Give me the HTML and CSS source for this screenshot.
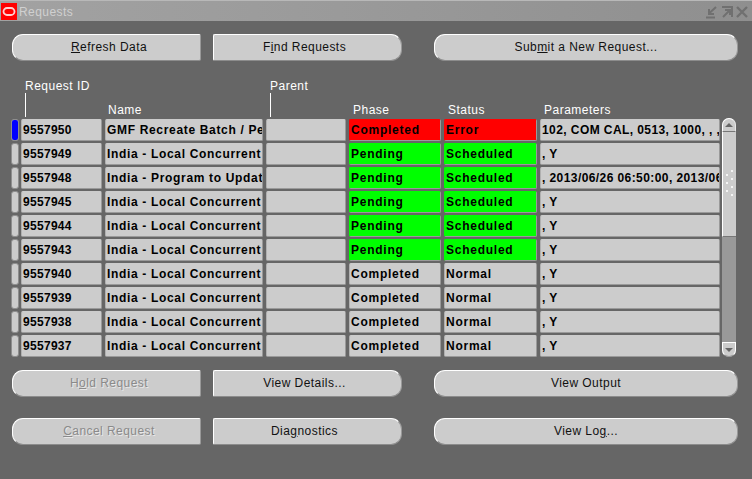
FILE: index.html
```html
<!DOCTYPE html>
<html lang="en">
<head>
<meta charset="utf-8">
<title>Requests</title>
<link rel="stylesheet" href="styles.css">
</head>
<body>
<div class="window">
  <header class="titlebar">
    <svg class="logo" width="16" height="17" viewBox="0 0 16 17"><rect width="16" height="17" fill="#ff0000"/><rect x="2.5" y="5" width="11" height="7" rx="3.5" fill="none" stroke="#ffd0d0" stroke-width="1.8"/></svg>
    <span class="title">Requests</span>
    <div class="winctl">
      <svg width="14" height="14" viewBox="0 0 14 14"><path d="M1 12.5H10M11 2L4 8.5M4 4V9H9" fill="none" stroke="#707070" stroke-width="2"/></svg>
      <svg width="14" height="14" viewBox="0 0 14 14"><path d="M2 2H12V12M3 12L10 5M5 5H10V10" fill="none" stroke="#707070" stroke-width="2"/></svg>
      <svg width="14" height="14" viewBox="0 0 14 14"><path d="M2 2L12 12M12 2L2 12" fill="none" stroke="#707070" stroke-width="2.4"/></svg>
    </div>
  </header>

  <div class="btnrow first">
    <button class="btn left"><u>R</u>efresh Data</button>
    <button class="btn mid">F<u>i</u>nd Requests</button>
    <button class="btn wide">Sub<u>m</u>it a New Request...</button>
  </div>

  <div class="grid">
    <div class="heads">
      <div class="head"></div>
      <div class="head tall"><span>Request ID</span><i class="tick"></i></div>
      <div class="head nmh"><span>Name</span></div>
      <div class="head tall"><span>Parent</span><i class="tick"></i></div>
      <div class="head"><span>Phase</span></div>
      <div class="head"><span>Status</span></div>
      <div class="head"><span>Parameters</span></div>
    </div>
    <div class="body">
      <div class="rows">
        <div class="row"><div class="rh current"><b></b></div><div class="c id">9557950</div><div class="c nm">GMF Recreate Batch / Pending Resources</div><div class="c"></div><div class="c ph red">Completed</div><div class="c ph red">Error</div><div class="c pa">102, COM CAL, 0513, 1000, , , , , ,</div></div>
        <div class="row"><div class="rh"></div><div class="c id">9557949</div><div class="c nm">India - Local Concurrent Program</div><div class="c"></div><div class="c ph green">Pending</div><div class="c ph green">Scheduled</div><div class="c pa">, Y</div></div>
        <div class="row"><div class="rh"></div><div class="c id">9557948</div><div class="c nm">India - Program to Update Records</div><div class="c"></div><div class="c ph green">Pending</div><div class="c ph green">Scheduled</div><div class="c pa">, 2013/06/26 06:50:00, 2013/06/26 07:00:00</div></div>
        <div class="row"><div class="rh"></div><div class="c id">9557945</div><div class="c nm">India - Local Concurrent Program</div><div class="c"></div><div class="c ph green">Pending</div><div class="c ph green">Scheduled</div><div class="c pa">, Y</div></div>
        <div class="row"><div class="rh"></div><div class="c id">9557944</div><div class="c nm">India - Local Concurrent Program</div><div class="c"></div><div class="c ph green">Pending</div><div class="c ph green">Scheduled</div><div class="c pa">, Y</div></div>
        <div class="row"><div class="rh"></div><div class="c id">9557943</div><div class="c nm">India - Local Concurrent Program</div><div class="c"></div><div class="c ph green">Pending</div><div class="c ph green">Scheduled</div><div class="c pa">, Y</div></div>
        <div class="row"><div class="rh"></div><div class="c id">9557940</div><div class="c nm">India - Local Concurrent Program</div><div class="c"></div><div class="c ph">Completed</div><div class="c ph">Normal</div><div class="c pa">, Y</div></div>
        <div class="row"><div class="rh"></div><div class="c id">9557939</div><div class="c nm">India - Local Concurrent Program</div><div class="c"></div><div class="c ph">Completed</div><div class="c ph">Normal</div><div class="c pa">, Y</div></div>
        <div class="row"><div class="rh"></div><div class="c id">9557938</div><div class="c nm">India - Local Concurrent Program</div><div class="c"></div><div class="c ph">Completed</div><div class="c ph">Normal</div><div class="c pa">, Y</div></div>
        <div class="row"><div class="rh"></div><div class="c id">9557937</div><div class="c nm">India - Local Concurrent Program</div><div class="c"></div><div class="c ph">Completed</div><div class="c ph">Normal</div><div class="c pa">, Y</div></div>
      </div>
      <div class="scrollbar">
        <div class="arrow up"><i></i></div>
        <div class="track">
          <div class="thumb">
            <svg class="grip" width="8" height="26" viewBox="0 0 8 26"><g fill="#f4f4f4"><rect x="5" y="0" width="2" height="2"/><rect x="0" y="4" width="2" height="2"/><rect x="5" y="8" width="2" height="2"/><rect x="0" y="12" width="2" height="2"/><rect x="5" y="16" width="2" height="2"/><rect x="0" y="20" width="2" height="2"/><rect x="5" y="24" width="2" height="2"/></g></svg>
          </div>
        </div>
        <div class="arrow down"><i></i></div>
      </div>
    </div>
  </div>

  <div class="btnrow second">
    <button class="btn left dis">H<u>o</u>ld Request</button>
    <button class="btn mid">View Details...</button>
    <button class="btn wide">View Output</button>
  </div>
  <div class="btnrow third">
    <button class="btn left dis"><u>C</u>ancel Request</button>
    <button class="btn mid">Dia<u>g</u>nostics</button>
    <button class="btn wide">View Lo<u>g</u>...</button>
  </div>
</div>
</body>
</html>
```
FILE: styles.css
```css
* { box-sizing: border-box; }
html, body { margin: 0; padding: 0; }
body { background: #666666; font-family: "Liberation Sans", Arial, sans-serif; font-size: 12px; overflow: hidden; }
.window { width: 752px; height: 479px; display: flex; flex-direction: column; background: #666666; }

.titlebar { height: 21px; flex: none; display: flex; align-items: center; padding: 1px 3px 0 1px; gap: 2px;
  border-top: 1px solid #b8b8b8; background: linear-gradient(90deg, #a2a2a2, #9a9a9a 45%, #8f8f8f); }
.logo { flex: none; }
.title { color: #d0d0d0; font-size: 12px; letter-spacing: .45px; }
.winctl { margin-left: auto; display: flex; gap: 1px; }

.btnrow { flex: none; display: flex; padding-left: 12px; }
.first { margin-top: 13px; }
.second { margin-top: 13px; }
.third { margin-top: 21px; }
.btn { height: 27px; padding: 0 0 2px; font: inherit; font-size: 12px; letter-spacing: .45px; color: #111; background: #cccccc;
  border: 0; border-top: 1px solid #fff; border-bottom: 1px solid #8c8c8c; }
.btn u { text-underline-offset: 1px; }
.left { width: 189px; padding-left: 5px; border-radius: 11px 2px 2px 11px; border-left: 1px solid #fff; border-right: 1px solid #999; }
.mid { width: 189px; padding-right: 6px; margin-left: 12px; border-radius: 2px 11px 11px 2px; border-left: 1px solid #fff; border-right: 1px solid #999; }
.wide { width: 304px; margin-left: 32px; border-radius: 11px; border-left: 1px solid #fff; border-right: 1px solid #999; }
.dis { color: #8a8a8a; text-shadow: 1px 1px 0 #e8e8e8; }

.grid { flex: none; margin-top: 17px; padding-left: 11px; }
.heads, .row { display: grid; grid-template-columns: 7px 81px 158px 80px 92px 93px 180px; column-gap: 3px; }
.heads { height: 41px; align-items: end; color: #fff; font-size: 12px; letter-spacing: .5px; }
.head { display: flex; flex-direction: column; padding-left: 4px; padding-bottom: 2px; line-height: 14px; }
.nmh { padding-left: 3px; }
.tick { display: block; width: 1px; height: 24px; background: #fff; }
.body { display: flex; align-items: flex-start; }
.rows { display: flex; flex-direction: column; gap: 2px; width: 709px; }
.row { height: 22px; }
.rh { width: 8px; background: #cccccc; border: 1px solid #8e8e8e; border-radius: 3px; }
.rh b { display: block; height: 100%; background: #0000ff; border-radius: 2px; }
.c { background: #cccccc; border: 1px solid #9a9a9a; border-top-color: #cccccc; border-left-color: #b0b0b0; border-radius: 2px;
  font-weight: bold; color: #000; letter-spacing: .55px; line-height: 20px; padding-left: 1px; white-space: nowrap; overflow: hidden; }
.id { letter-spacing: .3px; }
.nm { letter-spacing: .67px; }
.ph { letter-spacing: .75px; }
.pa { letter-spacing: .42px; }
.red { background: #ff0000; border-top-color: #ff0000; border-left-color: #ff0000; }
.green { background: #00ff00; border-top-color: #00ff00; border-left-color: #00ff00; }

.scrollbar { width: 14px; height: 239px; margin-left: 2px; margin-top: -1px; display: flex; flex-direction: column; background: #999999; border-radius: 7px; }
.arrow { flex: none; background: #cccccc; display: flex; align-items: center; justify-content: center; }
.arrow i { display: block; width: 0; height: 0; border-left: 4px solid transparent; border-right: 4px solid transparent; }
.up { height: 14px; border-radius: 7px 7px 0 0; border: 1px solid #fff; border-bottom: 1px solid #777; border-right-color: #e8e8e8; }
.up i { border-bottom: 4px solid #666; }
.down { height: 15px; border-radius: 0 0 7px 7px; border: 1px solid #fff; border-bottom-color: #999; }
.down i { border-top: 4px solid #666; }
.track { flex: 1; background: #999; }
.thumb { height: 105px; background: #cccccc; border-left: 1px solid #fff; border-bottom: 1px solid #777; display: flex; align-items: flex-start; justify-content: center; padding-top: 38px; }
.grip { display: block; }
```
